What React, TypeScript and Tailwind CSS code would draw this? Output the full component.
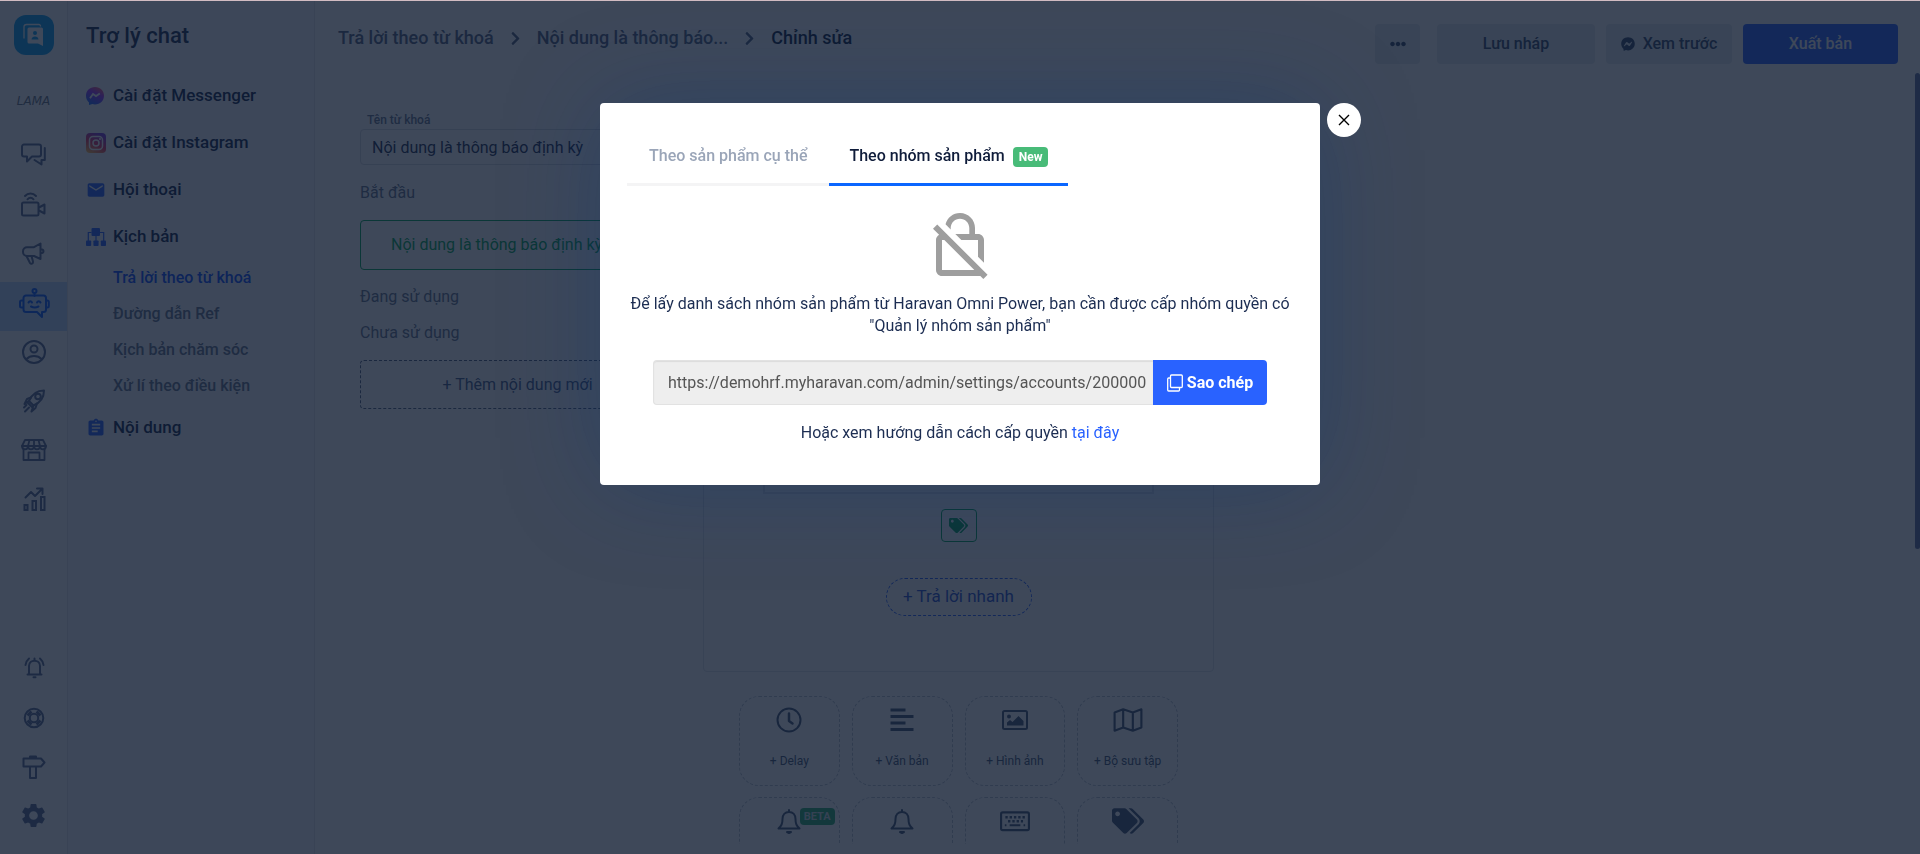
import type { ReactNode } from "react";
import { FaChevronRight, FaEllipsisH, FaFacebookMessenger, FaTags } from "react-icons/fa";
import { MdAssignment, MdEmail, MdOutlineNoEncryption, MdSettings } from "react-icons/md";

function LineIcon({ children, size = 28, width = 2 }: { children: ReactNode; size?: number; width?: number }) {
    return (
        <svg
            width={size}
            height={size}
            viewBox="0 0 28 28"
            fill="none"
            stroke="currentColor"
            strokeWidth={width}
            strokeLinejoin="round"
            strokeLinecap="round"
            aria-hidden="true"
        >
            {children}
        </svg>
    );
}

const railTop = [
    {
        label: "Tin nhắn",
        icon: (
            <LineIcon>
                <path d="M4 2.500h15a2 2 0 0 1 2 2v8a2 2 0 0 1-2 2h-7l-5 5v-5H4a2 2 0 0 1-2-2v-8a2 2 0 0 1 2-2z" />
                <path d="M24.800 6v12h-3.300v4.500l-7-4.500" />
            </LineIcon>
        ),
    },
    {
        label: "Livestream",
        icon: (
            <LineIcon>
                <rect x="2" y="11.500" width="16.500" height="13" rx="1.500" />
                <path d="M19 16.500l5.500-3v9l-5.500-3" />
                <path d="M5 5c3-3.500 8-3.500 11 0M7.500 8.300c1.800-2 4.200-2 6 0" />
            </LineIcon>
        ),
    },
    {
        label: "Chiến dịch",
        icon: (
            <LineIcon>
                <path d="M20.500 3.500v15.500l-6.500-3H7a4 4 0 0 1-4-4v-.800a4 4 0 0 1 4-4h7zM20.500 9.300c4 0 4 4 0 4" />
                <path d="M6.500 16l3.500 7c1 1.500 3.500.5 3-1.500l-1.500-5.500" />
            </LineIcon>
        ),
    },
    {
        label: "Trợ lý chat",
        active: true,
        icon: (
            <svg width="32" height="32" viewBox="0 0 32 32" fill="none" stroke="currentColor" strokeWidth="2" strokeLinejoin="round" strokeLinecap="round" aria-hidden="true">
                <circle cx="16.500" cy="4" r="2" />
                <path d="M16.500 6v3" />
                <path d="M8 8.500h17.500a2.500 2.500 0 0 1 2.500 2.500v11.500a2.500 2.500 0 0 1-2.500 2.500H24v5l-5-5H8a2.500 2.500 0 0 1-2.500-2.500V11A2.500 2.500 0 0 1 8 8.500z" />
                <path d="M5 13.500H3.500a1.500 1.500 0 0 0-1.500 1.500v4a1.500 1.500 0 0 0 1.500 1.500H5M28.500 13.500h.8a1.500 1.500 0 0 1 1.500 1.500v4a1.500 1.500 0 0 1-1.500 1.500h-.8" />
                <path d="M10.500 15.500c.8-1.800 2.700-1.800 3.500 0M19 15.500c.8-1.800 2.700-1.800 3.500 0M13 19.500c2.500 1.300 5 1.300 7.500 0" />
            </svg>
        ),
    },
    {
        label: "Khách hàng",
        icon: (
            <LineIcon>
                <circle cx="14" cy="14" r="11" />
                <circle cx="14" cy="11" r="3.500" />
                <path d="M6.500 21c3.500-4 11.500-4 15 0" />
            </LineIcon>
        ),
    },
    {
        label: "Tăng trưởng",
        icon: (
            <LineIcon>
                <path d="M9 14c3-7 8-10.500 15-10.500 0 7-3.500 12-10.500 15z" />
                <circle cx="18" cy="9.500" r="2.800" />
                <path d="M11 10.500L7 12l-2.500 5 4.500-3M17 16.500L15.500 21l-4 3.500 2-6M7.500 15.500l5 5M6.500 18l-2.500 2.500M9 20.500L5 24.500" />
            </LineIcon>
        ),
    },
    {
        label: "Cửa hàng",
        icon: (
            <LineIcon width={1.8}>
                <path d="M5 4h18l3 6H2zM3.500 12.500V24h21V12.500M8.500 24v-7.500h11V24" />
                <path d="M2 10c0 4.500 6 4.500 6 0 0 4.500 6 4.500 6 0 0 4.500 6 4.500 6 0 0 4.500 6 4.500 6 0M9.500 4L8 10M18.500 4l1.500 6M14 4v6" />
            </LineIcon>
        ),
    },
    {
        label: "Báo cáo",
        icon: (
            <LineIcon>
                <path d="M4.500 20h3v5h-3zM12.500 16h3.500v9h-3.500zM21 12h3.500v13H21z" strokeLinejoin="miter" />
                <path d="M5.500 12.500l5.500-5.500 4 4 7-7M17 3.500h5.500V9" />
            </LineIcon>
        ),
    },
];

const railBottom = [
    {
        label: "Thông báo",
        icon: (
            <LineIcon>
                <path d="M9 19v-8c0-7 11-7 11 0v8M7.500 19.500h14M14.500 3.500v2M13.500 22.300h2M5.500 10c.2-2.500 1.200-4.500 3.500-6.500M23.500 10c-.2-2.500-1.200-4.500-3.500-6.500" />
            </LineIcon>
        ),
    },
    {
        label: "Hỗ trợ",
        icon: (
            <LineIcon>
                <circle cx="14" cy="14" r="9.300" />
                <circle cx="14" cy="14" r="4.200" />
                <path d="M8.500 8.500l2 2M19.500 8.500l-2 2M8.500 19.500l2-2M19.500 19.500l-2-2" strokeWidth="5.500" strokeLinecap="butt" />
            </LineIcon>
        ),
    },
    {
        label: "Hướng dẫn",
        icon: (
            <LineIcon>
                <path d="M3.500 5.500h17.500l3.500 4-3.500 4H3.500zM10 5.500v-2h6v2M10 13.500v11.500h6V13.500" />
            </LineIcon>
        ),
    },
    { label: "Cài đặt", icon: <MdSettings size={29} /> },
];

const subMenu = ["Đường dẫn Ref", "Kịch bản chăm sóc", "Xử lí theo điều kiện"];

const bell = (
    <LineIcon>
        <path d="M3.500 21.500h21c-3-3-4-4.500-4-9.500 0-4-2.500-7-6.500-7s-6.500 3-6.500 7c0 5-1 6.500-4 9.500zM14 3v2" />
        <path d="M12 25h4l-2 1z" fill="currentColor" />
    </LineIcon>
);

const blocks: { name: string; text?: string; icon: ReactNode; beta?: boolean }[] = [
    {
        name: "Delay",
        text: "+ Delay",
        icon: (
            <LineIcon>
                <circle cx="14" cy="14" r="11.500" />
                <path d="M14 7.500V15l3.500 2.500" strokeWidth="2.500" />
            </LineIcon>
        ),
    },
    {
        name: "Văn bản",
        text: "+ Văn bản",
        icon: (
            <LineIcon width={3}>
                <path d="M2.500 4h15M2.500 10.500h23M2.500 17h15M2.500 23.500h23" strokeLinecap="butt" />
            </LineIcon>
        ),
    },
    {
        name: "Hình ảnh",
        text: "+ Hình ảnh",
        icon: (
            <LineIcon>
                <rect x="2" y="5" width="24" height="18" rx="1.500" />
                <circle cx="8" cy="10.500" r="2" fill="currentColor" stroke="none" />
                <path d="M6 19.500v-3l3-2.500 2.500 2 6-6 5 5v4.500z" fill="currentColor" stroke="none" />
            </LineIcon>
        ),
    },
    {
        name: "Bộ sưu tập",
        text: "+ Bộ sưu tập",
        icon: (
            <LineIcon size={30}>
                <path d="M1.500 7l8-3 9 3 8-3v17l-8 3-9-3-8 3zM9.500 4v17M18.500 7v17" />
            </LineIcon>
        ),
    },
    { name: "Thông báo định kỳ", beta: true, icon: bell },
    { name: "Thông báo", icon: bell },
    {
        name: "Bàn phím",
        icon: (
            <LineIcon size={30}>
                <rect x="1" y="6" width="26" height="16.500" rx="1.500" />
                <path d="M5 10.500h18.500M7.500 14.300h14" strokeWidth="2.400" strokeDasharray="2.200 1.800" strokeLinecap="butt" />
                <path d="M9 18h10M4.500 18h1.500M22 18h1.500" strokeLinecap="butt" />
            </LineIcon>
        ),
    },
    { name: "Gắn thẻ", icon: <FaTags size={32} /> },
];

function RailButton({ label, icon, active }: { label: string; icon: ReactNode; active?: boolean }) {
    return (
        <button
            type="button"
            aria-label={label}
            className={`flex h-[49px] w-full shrink-0 items-center justify-center pb-2 ${active ? "bg-[#c4dcff] text-[#0a5cff]" : "text-[#5a6b90]"}`}
        >
            {icon}
        </button>
    );
}

function Rail() {
    return (
        <nav className="flex w-[68px] shrink-0 flex-col border-r border-[#e4e6ea] pt-[14px] pb-[10px]">
            <div className="flex h-10 w-10 items-center justify-center self-center rounded-xl bg-[#0aa0f0]">
                <svg width="24" height="24" viewBox="0 0 24 24" aria-hidden="true">
                    <path d="M18.500 3.500V3a1.500 1.500 0 0 0-1.500-1.500H4.500A2.500 2.500 0 0 0 2 4v11.500" fill="none" stroke="#fff" strokeWidth="1.300" />
                    <path d="M7 4.500h12.500A1.500 1.500 0 0 1 21 6v17l-5-2.500H7A1.500 1.500 0 0 1 5.500 19V6A1.500 1.500 0 0 1 7 4.500z" fill="#fff" />
                    <circle cx="13" cy="10" r="2" fill="#0aa0f0" />
                    <path d="M9.500 16.500c0-4 7-4 7 0z" fill="#0aa0f0" />
                </svg>
            </div>
            <span className="mt-[38px] mb-[26px] self-center font-['DejaVu_Sans',sans-serif] text-xs leading-4 text-[#6c7481] italic">LAMA</span>
            {railTop.map((item) => (
                <RailButton key={item.label} {...item} />
            ))}
            <div className="mt-auto">
                {railBottom.map((item) => (
                    <RailButton key={item.label} {...item} />
                ))}
            </div>
        </nav>
    );
}

function MenuLink({ icon, children }: { icon: ReactNode; children: ReactNode }) {
    return (
        <a href="#" className="flex h-[47px] items-center text-[17px] font-medium text-[#10234a]">
            <span className="flex w-[27px] items-center">{icon}</span>
            {children}
        </a>
    );
}

function SideMenu() {
    return (
        <aside className="w-[247px] shrink-0 border-r border-[#e4e6ea] bg-[#fbfbfc] pt-[21px] pl-[18px]">
            <h1 className="mb-[22px] text-[22px] leading-7 font-medium text-[#1c2d52]">Trợ lý chat</h1>
            <MenuLink
                icon={
                    <svg width="18" height="18" viewBox="0 0 18 18" aria-hidden="true">
                        <defs>
                            <linearGradient id="msg" x1="0.300" y1="1" x2="0.800" y2="0">
                                <stop offset="0" stopColor="#1a6dff" />
                                <stop offset="0.600" stopColor="#a033ff" />
                                <stop offset="1" stopColor="#ff6070" />
                            </linearGradient>
                        </defs>
                        <path d="M9 0c5.200 0 9 3.800 9 8.700s-3.800 8.700-9 8.700c-1 0-1.800-.1-2.600-.3L3 18v-2.600C1 13.700 0 11.400 0 8.700 0 3.800 3.800 0 9 0z" fill="url(#msg)" />
                        <path d="M4 11.300l3-4.200 3 2 3.800-2.600" fill="none" stroke="#fff" strokeWidth="1.800" />
                    </svg>
                }
            >
                Cài đặt Messenger
            </MenuLink>
            <MenuLink
                icon={
                    <svg width="20" height="20" viewBox="0 0 20 20" aria-hidden="true">
                        <defs>
                            <linearGradient id="insta" x1="0.100" y1="1" x2="0.600" y2="0">
                                <stop offset="0" stopColor="#ffc050" />
                                <stop offset="0.500" stopColor="#e8305c" />
                                <stop offset="1" stopColor="#7a38d8" />
                            </linearGradient>
                        </defs>
                        <rect width="20" height="20" rx="4" fill="url(#insta)" />
                        <g fill="none" stroke="#fff" strokeWidth="1.500">
                            <rect x="3.500" y="3.500" width="13" height="13" rx="3.500" />
                            <circle cx="10" cy="10" r="3" />
                        </g>
                        <circle cx="14" cy="6" r="1" fill="#fff" />
                    </svg>
                }
            >
                Cài đặt Instagram
            </MenuLink>
            <MenuLink icon={<MdEmail size={20} color="#2962ff" />}>Hội thoại</MenuLink>
            <MenuLink
                icon={
                    <svg width="20" height="18" viewBox="0 0 20 18" fill="#2962ff" aria-hidden="true">
                        <rect x="5.500" y="0" width="8.500" height="8" rx="1" />
                        <path d="M5.500 4.500H2.300V13M14 4.500h3.700V13M10 8v5" fill="none" stroke="#2962ff" strokeWidth="1.200" />
                        <rect x="0" y="12.500" width="5.200" height="5.500" rx="0.800" />
                        <rect x="7.400" y="12.500" width="5.200" height="5.500" rx="0.800" />
                        <rect x="14.800" y="12.500" width="5.200" height="5.500" rx="0.800" />
                    </svg>
                }
            >
                Kịch bản
            </MenuLink>
            <div className="flex flex-col pl-[27px] text-base font-medium text-[#65738c]">
                <a href="#" className="h-9 leading-9 text-[#0a4cff]">Trả lời theo từ khoá</a>
                {subMenu.map((item) => (
                    <a key={item} href="#" className="h-9 leading-9">{item}</a>
                ))}
            </div>
            <MenuLink icon={<MdAssignment size={20} color="#2962ff" />}>Nội dung</MenuLink>
        </aside>
    );
}

function Header() {
    return (
        <header className="flex items-start justify-between pt-[23px] pr-[22px] pl-[23px]">
            <ol className="flex items-center text-lg leading-7 font-medium text-[#52627f]">
                <li><a href="#">Trả lời theo từ khoá</a></li>
                <li aria-hidden="true" className="mx-[14px]"><FaChevronRight size={15} /></li>
                <li><a href="#">Nội dung là thông báo...</a></li>
                <li aria-hidden="true" className="mx-[14px]"><FaChevronRight size={15} /></li>
                <li className="text-[#0e2040]">Chỉnh sửa</li>
            </ol>
            <div className="flex text-base font-medium text-[#354868]">
                <button type="button" aria-label="Thêm" className="mr-[17px] flex h-10 w-[45px] items-center justify-center rounded bg-[#e4ebee]">
                    <FaEllipsisH size={16} />
                </button>
                <button type="button" className="mr-[11px] h-10 w-[158px] rounded bg-[#e4ebee]">Lưu nháp</button>
                <button type="button" className="mr-[11px] flex h-10 w-[126px] items-center justify-center gap-2 rounded bg-[#e4ebee]">
                    <FaFacebookMessenger size={14} />
                    Xem trước
                </button>
                <button type="button" className="h-10 w-[155px] rounded bg-[#2962ff] text-white">Xuất bản</button>
            </div>
        </header>
    );
}

function KeywordColumn() {
    return (
        <section className="w-[315px] shrink-0 pt-12 text-base text-[#65738c]">
            <label htmlFor="keyword" className="ml-[7px] block text-xs leading-[17px] font-medium">Tên từ khoá</label>
            <input
                id="keyword"
                defaultValue="Nội dung là thông báo định kỳ"
                className="h-9 w-full rounded-sm border border-[#d5d9df] px-[11px] text-[#1c2d52]"
            />
            <h2 className="mt-4 leading-6">Bắt đầu</h2>
            <button type="button" className="mt-[15px] h-[50px] w-full rounded border border-[#00a854] pl-[30px] text-left text-[#00a854]">
                Nội dung là thông báo định kỳ
            </button>
            <h2 className="mt-[15px] leading-6">Đang sử dụng</h2>
            <h2 className="mt-3 leading-6">Chưa sử dụng</h2>
            <button type="button" className="mt-[15px] h-[49px] w-full rounded border border-dashed border-[#52627f] text-[#445a88]">
                + Thêm nội dung mới
            </button>
        </section>
    );
}

function FlowColumn() {
    return (
        <section className="flex w-[511px] shrink-0 flex-col items-center pt-12">
            <div className="flex h-[560px] w-full shrink-0 flex-col items-center rounded border border-[#dfe3e8]">
                <div className="h-[381px] w-[391px] shrink-0 border-2 border-[#dfe3e8]" />
                <button type="button" aria-label="Gắn thẻ" className="mt-[15px] flex h-[33px] w-9 shrink-0 items-center justify-center rounded border border-[#00a854] text-[#00a854]">
                    <FaTags size={19} />
                </button>
                <button type="button" className="mt-9 h-[38px] w-[146px] shrink-0 rounded-full border border-dashed border-[#2962ff] text-[17px] text-[#2952d0]">
                    + Trả lời nhanh
                </button>
            </div>
            <div className="mt-6 grid w-[439px] shrink-0 grid-cols-4 gap-x-3 gap-y-[11px]">
                {blocks.map((block) => (
                    <button
                        key={block.name}
                        type="button"
                        aria-label={block.name}
                        className="relative flex h-[90px] flex-col items-center rounded-[20px] border border-dashed border-[#b9c0cc] pt-[9px] text-xs text-[#445674]"
                    >
                        <span className="flex h-7 items-center">{block.icon}</span>
                        {block.text && <span className="mt-[17px] leading-5">{block.text}</span>}
                        {block.beta && (
                            <span className="absolute top-[10px] right-1 rounded bg-[#28b070] px-1 text-[11px] leading-[17px] font-bold text-[#d0dce0]">
                                BETA
                            </span>
                        )}
                    </button>
                ))}
            </div>
        </section>
    );
}

function PermissionDialog() {
    return (
        <div role="dialog" aria-modal="true" aria-label="Theo nhóm sản phẩm" className="relative w-[720px] rounded bg-white px-[27px] pt-7 pb-[41px] text-center text-base text-[#1c2d52] shadow-[0_0_100px_rgba(0,50,120,0.3)]">
            <div role="tablist" className="flex font-medium">
                <button type="button" role="tab" aria-selected={false} className="h-[55px] border-b-3 border-[#f4f4f5] px-[22px] pb-[3px] text-[#9aa5b8]">
                    Theo sản phẩm cụ thể
                </button>
                <button type="button" role="tab" aria-selected={true} className="flex h-[55px] items-center gap-2 border-b-3 border-[#0a66ff] px-5 pb-[3px] text-[#0f1c3a]">
                    Theo nhóm sản phẩm
                    <span className="mt-[3px] rounded bg-[#48bb78] px-[6px] text-xs leading-5 font-bold text-white">New</span>
                </button>
            </div>
            <MdOutlineNoEncryption size={72} color="#9e9e9e" className="mx-auto mt-6" />
            <p className="mt-[11px] leading-[22px]">
                Để lấy danh sách nhóm sản phẩm từ Haravan Omni Power, bạn cần được cấp nhóm quyền có "Quản lý nhóm sản phẩm"
            </p>
            <div className="mx-[26px] mt-[23px] flex h-[45px]">
                <input
                    readOnly
                    aria-label="Đường dẫn cấp quyền"
                    value="https://demohrf.myharavan.com/admin/settings/accounts/200000"
                    className="min-w-0 flex-1 rounded-l border border-r-0 border-[#e2e2e2] bg-[#eeeeee] pl-[14px] text-[#555555] shadow-[inset_0_1px_1px_rgba(0,0,0,0.08)]"
                />
                <button type="button" className="flex w-[114px] items-center justify-center gap-1 rounded-r bg-[#2962ff] font-bold text-white">
                    <svg width="16" height="18" viewBox="0 0 16 18" fill="none" stroke="currentColor" strokeWidth="1.300" aria-hidden="true">
                        <rect x="3.500" y="1" width="11.800" height="12.500" rx="1" />
                        <path d="M3.500 4H1.700a1 1 0 0 0-1 1v11a1 1 0 0 0 1 1h9.800a1 1 0 0 0 1-1v-2.500" />
                    </svg>
                    Sao chép
                </button>
            </div>
            <p className="mt-[17px] leading-[22px]">
                Hoặc xem hướng dẫn cách cấp quyền <a href="#" className="text-[#2962ff]">tại đây</a>
            </p>
            <button type="button" aria-label="Đóng" className="absolute top-0 left-full ml-[7px] flex h-[34px] w-[34px] items-center justify-center rounded-full bg-white text-black">
                <svg width="12" height="12" viewBox="0 0 12 12" stroke="currentColor" strokeWidth="1.400" aria-hidden="true">
                    <path d="M1 1l10 10M11 1L1 11" />
                </svg>
            </button>
        </div>
    );
}

export default function App() {
    return (
        <div className="relative h-screen overflow-hidden bg-white font-[Roboto,sans-serif]">
            <div className="flex h-full pt-px">
                <Rail />
                <SideMenu />
                <div className="flex min-w-0 flex-1 flex-col pb-[10px]">
                    <Header />
                    <main className="flex min-h-0 flex-1 gap-7 overflow-hidden pl-[45px]">
                        <KeywordColumn />
                        <FlowColumn />
                        <div className="mt-[9px] ml-auto h-[476px] w-[5px] rounded-full bg-[#6070a0]" />
                    </main>
                </div>
            </div>
            <div className="fixed inset-0 flex items-start justify-center border-t border-[#d2bcc2] bg-[#0e1a2f]/80 pt-[102px]">
                <PermissionDialog />
            </div>
        </div>
    );
}
